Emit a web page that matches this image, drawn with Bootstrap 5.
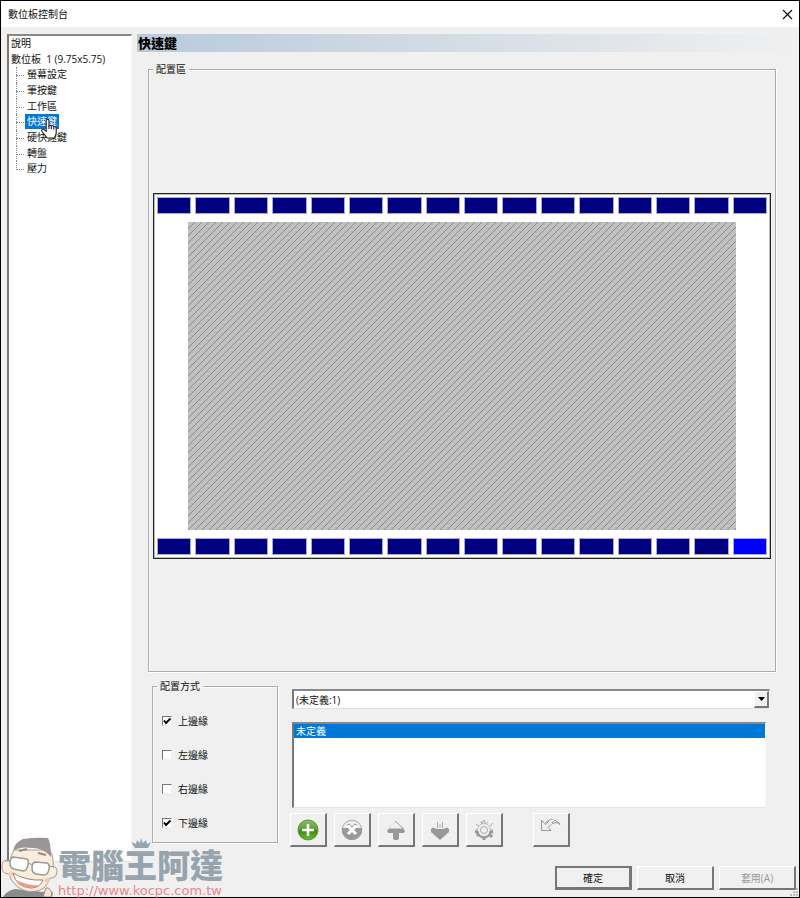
<!DOCTYPE html>
<html lang="zh-Hant">
<head>
<meta charset="utf-8">
<meta name="viewport" content="width=device-width, initial-scale=1">
<title>數位板控制台</title>
<link href="https://cdn.jsdelivr.net/npm/bootstrap@5.3.0/dist/css/bootstrap.min.css" rel="stylesheet">
<style>
body{font-family:"Open Sans","Noto Sans CJK TC",sans-serif;font-size:10px;line-height:14px;color:#111;background:#f0f0f0}
.win{min-height:100vh;border:1px solid #000;background:#f0f0f0}
.titlebar{height:26px;background:#fff;padding:0 5px 0 7px}
.close-btn{width:13px;height:13px;border:0;background:none;padding:0}
.close-btn svg,.tool svg,.hand svg,.face svg{display:block}
.sunken{background:#fff;border:1px solid #fff;border-top:2px solid #888;border-left:2px solid #777;border-bottom-color:#e2e2e2;border-right-color:#f8f8f8}
.workspace{padding:7px 3px 7px 6px;gap:5px}
.tree-pane{width:125px;margin-bottom:28px}
.tree{display:grid;grid-template-rows:repeat(9,1fr);height:141px;margin:0;padding:0;list-style:none}
.tree a{color:#111;text-decoration:none;padding:0 2px;white-space:nowrap;line-height:15px;display:inline-block}
.tree .child{margin-left:7px;position:relative;padding-left:9px}
.tree .child::before{content:"";position:absolute;left:0;top:0;bottom:0;border-left:1px dotted #888}
.tree .child::after{content:"";position:absolute;left:0;top:8px;width:8px;border-top:1px dotted #888}
.tree .child:last-child::before{bottom:7px}
.tree a.current{background:#0078d7;color:#fff}
.hand{position:absolute;left:24px;top:-12px;z-index:2;pointer-events:none}
.page-title{height:18px;line-height:18px;font-size:13px;font-weight:900;color:#000;background:linear-gradient(90deg,#b9cadb,#f0f0f0);padding-left:1px;margin:0}
.group{border:1px solid #aaa;box-shadow:1px 1px 0 #fff,inset 1px 1px 0 #fff;min-width:0}
.group legend{font-size:10px;line-height:12px;padding:0 3px;background:#f0f0f0}
.map-group{margin:11px 20px 0 11px;padding:6px 4px 0 4px}
.tablet{background:#fff;border:1px solid #222;outline:1px solid #bbb;outline-offset:-2px;padding:3px;aspect-ratio:618/366}
.keys{display:grid;grid-template-columns:repeat(16,1fr);gap:4px}
.keys span{height:17px;background:#000080;border:1px solid #aaaad4;background-clip:padding-box}
.keys span.on{background-color:#00f;border-color:#aaf}
.active-area{margin:8px 31px;background:#c0c0c0}
.lower{margin:8px 0 0 15px;gap:14px}
.edge-group{width:126px;height:163px;padding:0 9px 0 9px}
.edge-group legend{margin-left:-5px}
.edge-group .opts{padding:22px 0 0;gap:20px}
.opt{height:14px;gap:6px}
.opt label{line-height:14px}
.opt .form-check-input{width:10px;height:10px;margin:0;border-radius:0;border:1px solid #eee;border-top-color:#777;border-left-color:#777;background-color:#fff;background-size:10px 10px;box-shadow:none}
.opt .form-check-input:checked{background-image:url("data:image/svg+xml,%3Csvg xmlns='http://www.w3.org/2000/svg' viewBox='0 0 10 10'%3E%3Cpath d='M2 4.5 4 7 8.5 2.5' fill='none' stroke='%23000' stroke-width='2'/%3E%3C/svg%3E")}
.editor{padding-top:9px}
.combo{margin-right:26px;position:relative}
.combo select{appearance:none;width:100%;height:20px;border-radius:0;padding:0 20px 0 2px;color:#111;font-size:10px;line-height:14px;display:block}
.combo .arrow{position:absolute;right:1px;top:2px;bottom:1px;width:15px;pointer-events:none;background:#f0f0f0;border:1px solid #fff;border-right:2px solid #777;border-bottom:2px solid #777}
.list-box{margin:13px 30px 0 0;height:86px}
.list-box button{border:0;border-radius:0;background:#0078d7;color:#fff;font-size:10px;line-height:14px;padding:0 2px;text-align:left;width:100%;display:block}
.tools{margin:5px 0 0 -2px;gap:7px}
.raised{border:1px solid #fff;border-right:2px solid #777;border-bottom:2px solid #777;background:#f0f0f0;border-radius:0;padding:0;color:#111;font-size:10px;line-height:14px}
.raised:disabled{opacity:1;background:#f0f0f0;border-color:#fff #777 #777 #fff}
.tool{width:37px;height:34px}
.tool.undo{margin-left:23px}
.actions{gap:5px;margin-top:19px}
.actions .raised{width:77px;height:24px}
.actions .raised.main{border:2px solid #777;border-right-width:3px;border-bottom-width:3px}
.actions .raised:disabled{color:#999}
.brand{position:absolute;left:0;bottom:0;pointer-events:none}
.brand-name{font-family:"Noto Sans CJK TC",sans-serif;font-size:33px;line-height:42px;font-weight:900;color:#97a4ad}
.brand-url{font-family:"DejaVu Sans",sans-serif;font-size:13px;line-height:12px;color:#ef8589;text-decoration:none}
.crown{position:absolute;left:72px;top:-5px}
</style>
<script src="https://cdn.jsdelivr.net/npm/bootstrap@5.3.0/dist/js/bootstrap.bundle.min.js"></script>
</head>
<body>
<div class="win d-flex flex-column position-relative">
  <header class="titlebar d-flex align-items-center justify-content-between">
    <span>數位板控制台</span>
    <button class="close-btn" type="button" aria-label="關閉"><svg width="13" height="13" viewBox="0 0 13 13"><path d="M2 2 11 11M11 2 2 11" stroke="#111" stroke-width="1.2"/></svg></button>
  </header>
  <div class="workspace d-flex flex-grow-1">
    <nav class="tree-pane sunken flex-shrink-0">
      <ul class="tree">
        <li><a href="#">說明</a></li>
        <li><a href="#">數位板&nbsp; 1 (9.75x5.75)</a></li>
        <li class="child"><a href="#">螢幕設定</a></li>
        <li class="child"><a href="#">筆按鍵</a></li>
        <li class="child"><a href="#">工作區</a></li>
        <li class="child"><a href="#" class="current">快速鍵</a></li>
        <li class="child"><a href="#">硬快速鍵</a>
          <span class="hand"><svg width="19" height="22" viewBox="0 0 17 20"><path d="M5.500 12V2.200Q5.500 1 6.700 1T8 2.200V7Q9.200 6.200 10.200 7.200 11.500 6.600 12.400 7.800 14.400 7.400 14.600 9.200V13.500Q14.400 16 12.800 18.200H6.400Q4.600 15.600 1.400 11.800 1.200 10 3 10.200L5.500 12Z" fill="#fff" stroke="#222"/><path d="M8 7v3M10.200 7.500V10M12.400 8v2.500" stroke="#222" fill="none"/></svg></span></li>
        <li class="child"><a href="#">轉盤</a></li>
        <li class="child"><a href="#">壓力</a></li>
      </ul>
    </nav>
    <main class="d-flex flex-column flex-grow-1">
      <h1 class="page-title">快速鍵</h1>
      <fieldset class="group map-group flex-grow-1">
        <legend class="float-none w-auto mb-0">配置區</legend>
        <div class="d-flex flex-column justify-content-center h-100">
          <div class="tablet d-flex flex-column">
            <div class="keys"><span></span><span></span><span></span><span></span><span></span><span></span><span></span><span></span><span></span><span></span><span></span><span></span><span></span><span></span><span></span><span></span></div>
            <div class="active-area flex-grow-1"><svg class="d-block" width="100%" height="100%"><defs><pattern id="hatch" width="7" height="7" patternUnits="userSpaceOnUse"><path d="M-1 8 8-1M-1 1 1-1M6 8 8 6" stroke="#8c8c8c"/></pattern></defs><rect width="100%" height="100%" fill="url(#hatch)"/></svg></div>
            <div class="keys"><span></span><span></span><span></span><span></span><span></span><span></span><span></span><span></span><span></span><span></span><span></span><span></span><span></span><span></span><span></span><span class="on"></span></div>
          </div>
        </div>
      </fieldset>
      <div class="lower d-flex">
        <fieldset class="group edge-group flex-shrink-0">
          <legend class="float-none w-auto mb-0">配置方式</legend>
          <div class="opts d-flex flex-column">
            <div class="opt d-flex align-items-center"><input class="form-check-input" type="checkbox" id="e1" checked><label for="e1">上邊緣</label></div>
            <div class="opt d-flex align-items-center"><input class="form-check-input" type="checkbox" id="e2"><label for="e2">左邊緣</label></div>
            <div class="opt d-flex align-items-center"><input class="form-check-input" type="checkbox" id="e3"><label for="e3">右邊緣</label></div>
            <div class="opt d-flex align-items-center"><input class="form-check-input" type="checkbox" id="e4" checked><label for="e4">下邊緣</label></div>
          </div>
        </fieldset>
        <div class="editor flex-grow-1">
          <div class="combo"><select class="sunken" aria-label="快速鍵項目"><option>(未定義:1)</option></select><span class="arrow d-flex align-items-center justify-content-center"><svg width="7" height="4" viewBox="0 0 7 4"><path d="M0 0H7L3.500 4Z"/></svg></span></div>
          <div class="list-box sunken"><button type="button">未定義</button></div>
          <div class="tools d-flex">
            <button class="tool raised d-flex align-items-center justify-content-center" type="button" aria-label="新增"><svg width="22" height="22" viewBox="0 0 22 22"><defs><linearGradient id="g" x2="0" y2="1"><stop stop-color="#8fbf6a"/><stop offset=".45" stop-color="#5da033"/><stop offset=".55" stop-color="#3f8d14"/><stop offset="1" stop-color="#6dbb30"/></linearGradient></defs><circle cx="11" cy="11" r="10" fill="url(#g)" stroke="#58923a"/><path d="M11 5V17M5 11H17" stroke="#fff" stroke-width="2.600"/></svg></button>
            <button class="tool raised d-flex align-items-center justify-content-center" type="button" aria-label="刪除" disabled><svg width="22" height="22" viewBox="0 0 22 22"><circle cx="11" cy="11" r="9.800" fill="#eee" stroke="#aaa"/><path d="M1 9H21V11A10 10 0 0 1 1 11Z" fill="#999"/><path d="m6 6 2-1 3 3 3-3 2 1" fill="none" stroke="#999"/><path d="m7 7 8 8M15 7l-8 8" stroke="#fff" stroke-width="3"/></svg></button>
            <button class="tool raised d-flex align-items-center justify-content-center" type="button" aria-label="上移" disabled><svg width="20" height="20" viewBox="0 0 20 20"><path d="M2 8 9 2" stroke="#ddd"/><path d="m9 1 9 8" stroke="#999"/><path d="M1 11 3 8.500H17L19 11 18 13H13V18Q13 20 10 20T7 18V13H2Z" fill="#999"/></svg></button>
            <button class="tool raised d-flex align-items-center justify-content-center" type="button" aria-label="下移" disabled><svg width="20" height="20" viewBox="0 0 20 20"><path d="M7.500 2V8M10 4V8M12.500 2V8" stroke="#aaa"/><path d="M1 9 3 7.500 7 9H13L17 7.500 19 9V12L10 20 1 12Z" fill="#999"/></svg></button>
            <button class="tool raised d-flex align-items-center justify-content-center" type="button" aria-label="設定" disabled><svg width="22" height="22" viewBox="0 0 22 22"><path d="M2 11H5M3 5 6 7M8 2 9 5 11 1 13 5 15 3M17 7 20 4M17 11H20" fill="none" stroke="#aaa"/><path d="M2 13H5M4 17 6 15M11 17V21M16 15 19 18M17 13H20" stroke="#999" stroke-width="3"/><circle cx="11" cy="11" r="6.500" fill="#f0f0f0" stroke="#bbb"/><path d="M4.500 12a6.500 6.500 0 0 0 13 0" fill="none" stroke="#999" stroke-width="2"/><circle cx="11" cy="11" r="3.500" fill="none" stroke="#aaa"/></svg></button>
            <button class="tool undo raised d-flex align-items-center justify-content-center" type="button" aria-label="復原" disabled><svg width="22" height="22" viewBox="0 0 22 22"><path d="M1.500 1V11.500H11L8 8.500Q12 3 16 3.500T20 6M1.500 1 4.500 4.500Q9 0 13 0M5 6 9 2M12 4l3-3 5 4" fill="none" stroke="#999"/></svg></button>
          </div>
        </div>
      </div>
      <div class="actions d-flex justify-content-end">
        <button class="raised main" type="button">確定</button>
        <button class="raised" type="button">取消</button>
        <button class="raised" type="button" disabled>套用(A)</button>
      </div>
    </main>
  </div>
  <svg class="position-absolute bottom-0 end-0" width="9" height="9" viewBox="0 0 9 9"><path d="M6 0h2v2H6zM3 3h2v2H3zM6 3h2v2H6zM0 6h2v2H0zM3 6h2v2H3zM6 6h2v2H6z" fill="#bbb"/></svg>
  <div class="brand d-flex align-items-end">
    <span class="face"><svg width="57" height="60" viewBox="0 0 57 60"><path d="M2 60Q5 54 14 52L42 55 48 53 52 56 51 60Z" fill="#8b8b8b"/><path d="M42 60 45 51Q48 50 49 53L51 55 50 60Z" fill="#f8e3cd" stroke="#9b8d82"/><path d="M13 13Q10 18 9 24 2 21 1 28 0 37 8 37 11 48 22 53 33 57 43 51 47 47 49 41 55 42 56 35 56 29 52 30 53 20 49 13Z" fill="#faeddb" stroke="#aa9c90"/><path d="M12 14Q14 5 22 2 34 0 47 1 50 6 50 20 43 11 31 11 19 9 12 14Z" fill="#999695"/><path d="M18 14 26 12M37 16 45 18" stroke="#928a84" stroke-width="2"/><path d="M12 20 26 22Q28 23 27 28 26 34 22 34L13 32Q9 31 9 26T12 20ZM34 25 46 26Q49 27 48 32 47 38 43 38L35 37Q31 36 31 31T34 25Z" fill="#fff" stroke="#999" stroke-width="1.500"/><path d="M27 26 32 28M48 29 53 30M9 24 4 24" stroke="#999"/><circle cx="10" cy="37" r="2.500" fill="#f7cbb5"/><circle cx="46" cy="43" r="2.500" fill="#f7cbb5"/><path d="M12 36Q25 44 42 43 39 51 30 51 15 50 12 36Z" fill="#fff" stroke="#a67d74"/><path d="M15 43Q27 49 38 48 33 52 25 50 18 48 15 43Z" fill="#ef9a91"/></svg></span>
    <div class="d-flex flex-column position-relative">
      <svg class="crown" width="22" height="12" viewBox="0 0 22 12"><path d="M1 4 6 6 7 2 10 5 11 0 13 5 16 2 17 6 21 4 18 10H5Z" fill="#97a4ad"/></svg>
      <span class="brand-name">電腦王阿達</span>
      <a class="brand-url" href="#">http://www.kocpc.com.tw</a>
    </div>
  </div>
</div>
</body>
</html>
